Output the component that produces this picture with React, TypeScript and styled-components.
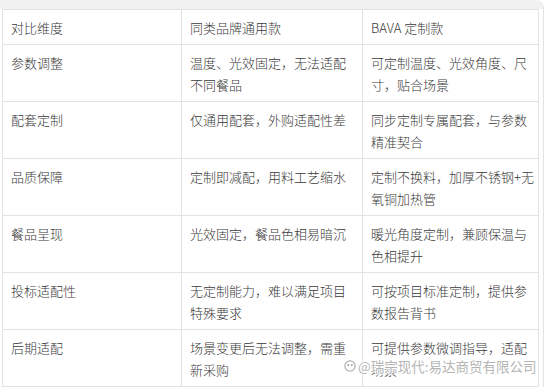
import React from "react";
import styled, { createGlobalStyle } from "styled-components";

const GlobalStyle = createGlobalStyle`
  html, body {
    margin: 0;
    padding: 0;
    background: #ffffff;
  }
  body {
    font-family: "Noto Sans CJK SC", "Noto Sans", sans-serif;
    color: #3a3a3a;
  }
`;

const Card = styled("div")({
  position: "relative",
  width: "539px",
  padding: "0 2px 0 2px",
  borderRight: "1px solid #e4e4e4",
  borderTopRightRadius: "8px",
  overflow: "hidden",
});

const Cap = styled("div")({
  height: "9px",
  margin: "0 -2px",
  backgroundColor: "#f1f1f1",
});

const Table = styled("table")({
  width: "536px",
  borderCollapse: "collapse",
  tableLayout: "fixed",
  fontSize: "13px",
  lineHeight: "22px",
});

const Cell = styled("td")<{ $padRight: number }>(({ $padRight }) => ({
  border: "1px solid #e2e2e2",
  padding: `7px ${$padRight}px 5px 8px`,
  verticalAlign: "top",
  color: "#3a3a3a",
  fontWeight: 300,
  wordBreak: "break-all",
  whiteSpace: "pre-line",
  textSpacingTrim: "space-all",
}));

const Watermark = styled("div")({
  position: "absolute",
  left: "344px",
  top: "356px",
  display: "flex",
  alignItems: "center",
  gap: "2px",
  fontSize: "13.5px",
  lineHeight: "20px",
  color: "rgba(160, 160, 160, 0.8)",
  textShadow: "1px 0 0 #fff, -1px 0 0 #fff, 0 1px 0 #fff, 0 -1px 0 #fff",
  whiteSpace: "nowrap",
  pointerEvents: "none",
});

const rows: Array<[string, string, string]> = [
  ["对比维度", "同类品牌通用款", "BAVA 定制款"],
  ["参数调整", "温度、光效固定，无法适配不同餐品", "可定制温度、光效角度、尺寸，贴合场景"],
  ["配套定制", "仅通用配套，外购适配性差", "同步定制专属配套，与参数精准契合"],
  ["品质保障", "定制即减配，用料工艺缩水", "定制不换料，加厚不锈钢+无氧铜加热管"],
  ["餐品呈现", "光效固定，餐品色相易暗沉", "暖光角度定制，兼顾保温与色相提升"],
  ["投标适配性", "无定制能力，难以满足项目特殊要求", "可按项目标准定制，提供参\n数报告背书"],
  ["后期适配", "场景变更后无法调整，需重新采购", "可提供参数微调指导，适配场景"],
];

const widths = ["179px", "181px", "176px"];
const padRights = [8, 8, 4];

const App: React.FC = () => (
  <>
    <GlobalStyle />
    <Card>
      <Cap />
      <Table>
        <colgroup>
          {widths.map((w, i) => (
            <col key={i} style={{ width: w }} />
          ))}
        </colgroup>
        <tbody>
          {rows.map((row, i) => (
            <tr key={i}>
              {row.map((text, j) => (
                <Cell key={j} $padRight={padRights[j]}>
                  {text}
                </Cell>
              ))}
            </tr>
          ))}
        </tbody>
      </Table>
      <Watermark>
        <svg width="12" height="12" viewBox="0 0 14 14">
          <circle cx="7" cy="7" r="6" fill="none" stroke="#b0b0b0" strokeWidth="1.4" />
          <circle cx="5" cy="6" r="1.2" fill="#b0b0b0" />
          <circle cx="9" cy="6" r="1.2" fill="#b0b0b0" />
        </svg>
        <span>@瑞宗现代:易达商贸有限公司</span>
      </Watermark>
    </Card>
  </>
);

export default App;
